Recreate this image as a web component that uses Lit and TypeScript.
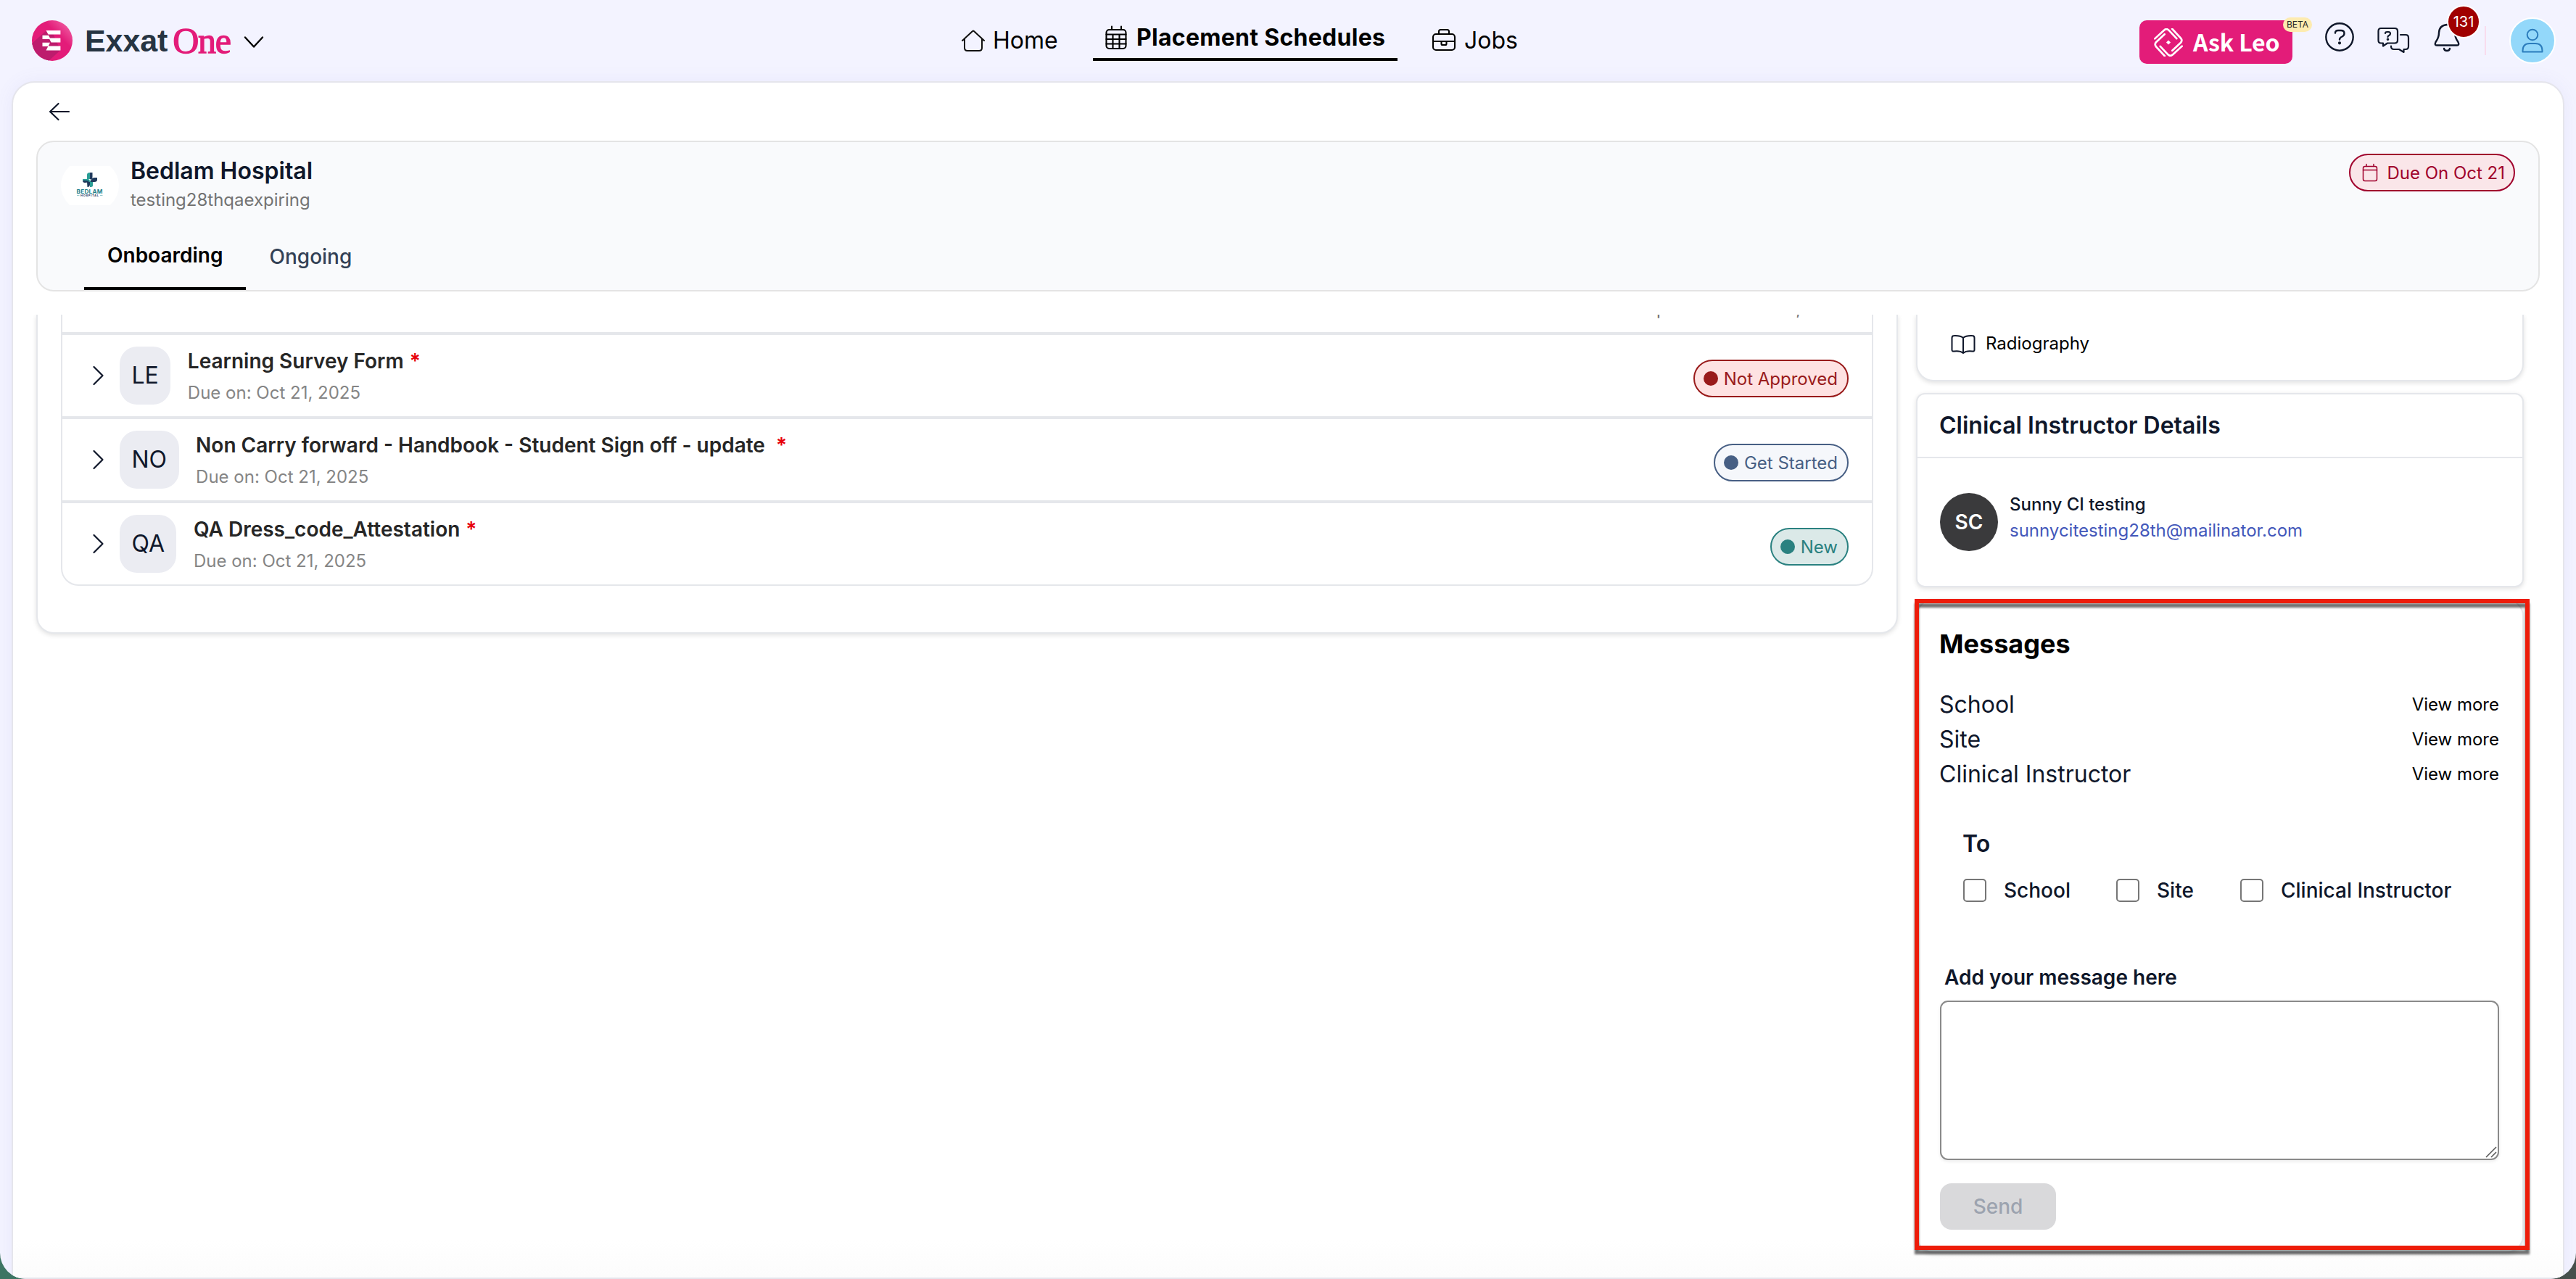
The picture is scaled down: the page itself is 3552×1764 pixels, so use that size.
import { LitElement, html, css, svg } from "lit";
import { customElement } from "lit/decorators.js";
import { classMap } from "lit/directives/class-map.js";

interface Requirement {
  code: string;
  title: string;
  wide?: boolean;
  due: string;
  status: string;
  tone: "danger" | "neutral" | "fresh";
}

const REQUIREMENTS: Requirement[] = [
  { code: "LE", title: "Learning Survey Form", due: "Oct 21, 2025", status: "Not Approved", tone: "danger" },
  { code: "NO", title: "Non Carry forward - Handbook - Student Sign off - update", wide: true, due: "Oct 21, 2025", status: "Get Started", tone: "neutral" },
  { code: "QA", title: "QA Dress_code_Attestation", due: "Oct 21, 2025", status: "New", tone: "fresh" },
];

const PARTIES = ["School", "Site", "Clinical Instructor"];

const LEO_ARM = "M1.2 14 L13.6 2.6 Q17 -0.3 20 2.6 L30.5 13.8";

@customElement("app-header")
export class AppHeader extends LitElement {
  static styles = css`
    :host { display: block; height: 112px; flex: none; }
    .bar {
      display: grid; grid-template-columns: 1282px 1624px 1fr; height: 112px;
      padding-left: 44px; box-sizing: border-box; color: #000;
      font-family: Inter, "Liberation Sans", sans-serif;
    }
    .brand { display: flex; align-items: center; height: 112px; }
    .mark { width: 56px; height: 56px; margin-right: 17px; }
    .exxat {
      font: 700 43px/56px "Liberation Sans", Arial, sans-serif; color: #263442; letter-spacing: -0.1px;
    }
    .one {
      font: 400 50px/56px "Liberation Serif", "Times New Roman", serif; color: #e31c79;
      -webkit-text-stroke: 1.3px #e31c79; letter-spacing: -1.3px; margin-left: 7px;
    }
    .chev { margin: 4px 0 0 18px; }
    .nav { display: flex; font-size: 32px; line-height: 40px; }
    .item { display: flex; align-items: flex-start; box-sizing: border-box; height: 84px; padding-top: 35px; white-space: nowrap; }
    .item svg { flex: none; }
    .label { margin-top: 1px; }
    .home { width: 181px; gap: 11px; }
    .sched { width: 420px; padding: 31px 0 0 17px; gap: 13px; border-bottom: 4px solid #000; font-weight: 700; }
    .sched .label { letter-spacing: 0.28px; }
    .jobs { margin-left: 47px; gap: 11px; }
    .actions { display: flex; align-items: flex-start; }
    .leo {
      position: relative; display: flex; align-items: center; box-sizing: border-box;
      width: 211px; height: 60px; margin-top: 28px; padding-left: 20px; gap: 14px;
      background: #e31c79; color: #fff; border-radius: 10px;
      font: 700 32px/40px "Noto Sans CJK JP", "Noto Sans", sans-serif; white-space: nowrap;
    }
    .ask { margin-bottom: 3px; letter-spacing: -0.1px; }
    .beta {
      position: absolute; left: 198px; top: -4px; width: 40px; height: 20px; border-radius: 10px;
      background: #fdebb0; color: #222; font: 400 12px/20px Inter, sans-serif; text-align: center;
    }
    .help { margin: 31px 0 0 45px; }
    .chat { margin: 37px 0 0 32px; }
    .bell { position: relative; margin: 32px 0 0 33px; width: 36px; height: 40px; }
    .count {
      position: absolute; left: 18px; top: -25px; width: 42px; height: 42px; border: 2px solid #fff;
      border-radius: 50%; background: #a00000; color: #fff; font-size: 20px; line-height: 42px; text-align: center;
    }
    .rule { width: 2px; height: 40px; margin: 36px 0 0 34px; background: #f8dcee; }
    .avatar {
      margin: 24px 0 0 32px; width: 60px; height: 60px; border: 2px solid #fff; border-radius: 50%;
      background: #93d8fa; display: flex; align-items: center; justify-content: center;
    }
  `;

  render() {
    return html`
      <div class="bar">
        <div class="brand">
          <svg class="mark" viewBox="0 0 56 56">
            <defs>
              <linearGradient id="g" x1="1" y1="0" x2="0.4" y2="0.6">
                <stop offset="0" stop-color="#f373b0" /><stop offset="0.6" stop-color="#e31c79" />
              </linearGradient>
              <clipPath id="c"><circle cx="28" cy="28" r="28" /></clipPath>
            </defs>
            <circle cx="28" cy="28" r="28" fill="url(#g)" />
            <path d="M19.500 14.500 L0 32V56H23L39.400 41.300 L28 16Z" fill="#bd1c6d" clip-path="url(#c)" />
            <path d="M19.500 14H39.400V19.500H22.500ZM14.500 20.700H23L25.700 26H14.500ZM23.500 24.500H39.400V30.500H26.500ZM14.500 30.700H25L22.500 36H14.500ZM22.500 35.500H39.400V41.500H19.500Z" fill="#fff" />
          </svg>
          <span class="exxat">Exxat</span><span class="one">One</span>
          <svg class="chev" width="28" height="18" viewBox="0 0 28 18" fill="none" stroke="#000" stroke-width="2.4" stroke-linecap="round" stroke-linejoin="round"><path d="M2 2.5L14 15.5L26 2.5" /></svg>
        </div>
        <nav class="nav">
          <div class="item home">
            <svg width="32" height="40" viewBox="0 0 32 40" fill="none" stroke="#111" stroke-width="2" stroke-linecap="round" stroke-linejoin="round"><path d="M1 21L15 8Q16 7.2 17 8L31 21M4 18.5V31Q4 35 8 35H24Q28 35 28 31V18.5" /></svg>
            <span class="label">Home</span>
          </div>
          <div class="item sched">
            <svg width="30" height="40" viewBox="0 0 30 40" fill="none" stroke="#000" stroke-width="2.1" stroke-linecap="round"><path d="M9 5.5V10M22 5.5V10M1.5 16.5H28.5M1.5 23H28.5M1.5 29.5H28.5M10.5 16.5V36M19.5 16.5V36" /><rect x="1.5" y="10" width="27" height="26" rx="4" /></svg>
            <span class="label">Placement Schedules</span>
          </div>
          <div class="item jobs">
            <svg width="34" height="40" viewBox="0 0 34 40" fill="none" stroke="#000" stroke-width="2.1" stroke-linejoin="round"><rect x="2" y="12" width="30" height="22" rx="4" /><path d="M10 12V8.5Q10 6 12.500 6H21.500Q24 6 24 8.500V12M2 22H32M13.500 22V25.500Q13.500 27 15 27H19Q20.500 27 20.500 25.500V22" /></svg>
            <span class="label">Jobs</span>
          </div>
        </nav>
        <div class="actions">
          <div class="leo">
            <svg width="40" height="39" viewBox="0 0 39 38" fill="none" stroke="#fff" stroke-width="2.6" stroke-linecap="round">
              ${[0, 90, 180, 270].map((a) => svg`<path d=${LEO_ARM} transform="rotate(${a} 19.5 19)" />`)}
              <path d="M19.500 16L22.500 19L19.500 22L16.500 19Z" fill="#fff" stroke="none" />
            </svg>
            <span class="ask">Ask Leo</span>
            <span class="beta">BETA</span>
          </div>
          <svg class="help" width="40" height="40" viewBox="0 0 40 40" fill="none" stroke="#0f172a" stroke-width="2.4" stroke-linecap="round" stroke-linejoin="round"><circle cx="20" cy="20" r="18.700" /><path d="M14 14.500Q14 11 18 11H22Q26.500 11 26.500 15Q26.500 18 23.500 19.500Q20 21 20 23.500" /><circle cx="20" cy="28.300" r="0.900" fill="#0f172a" /></svg>
          <svg class="chat" width="45" height="37" viewBox="0 0 45 37" fill="none" stroke="#0f172a" stroke-width="2.2" stroke-linecap="round" stroke-linejoin="round"><path d="M5 2H24Q28 2 28 6V18.500Q28 22.500 24 22.500H14L8 26.500V22.500H5Q1.500 22.500 1.500 18.500V6Q1.500 2 5 2Z" /><path d="M32 11H39Q43 11 43 15V27Q43 31 39 31H36.500V35L30 31H23Q19 31 19 27V26.500" /><path d="M11 9Q11 7 13.500 7H15.500Q18 7 18 9.500Q18 11 16 12Q14.500 12.700 14.500 14" /><circle cx="14.500" cy="17.200" r="0.700" fill="#0f172a" /></svg>
          <div class="bell">
            <svg width="36" height="40" viewBox="0 0 36 40" fill="none" stroke="#0f172a" stroke-width="2.4" stroke-linecap="round" stroke-linejoin="round"><path d="M18 2Q7.500 3 7 13Q7 20 2.500 26Q.500 30.500 4 30.500H32Q35.500 30.500 33.500 26Q29 20 29 13Q28.500 3 18 2ZM14 35Q14.500 38 18 38Q21.500 38 22 35" /></svg>
            <span class="count">131</span>
          </div>
          <div class="rule"></div>
          <div class="avatar">
            <svg width="30" height="34" viewBox="0 0 30 34" fill="none" stroke="#2b7cbc" stroke-width="2" stroke-linejoin="round"><circle cx="15" cy="9" r="7.300" /><path d="M1.500 32.500V31Q1.500 21 11 21H19Q28.500 21 28.500 31V32.500Z" /></svg>
          </div>
        </div>
      </div>
    `;
  }
}

@customElement("site-banner")
export class SiteBanner extends LitElement {
  static styles = css`
    :host { display: block; }
    .card {
      box-sizing: border-box; height: 208px; border: 2px solid #e4e4e4; border-radius: 24px; background: #f9fafc;
      display: flex; flex-direction: column; justify-content: space-between;
      font-family: Inter, "Liberation Sans", sans-serif;
    }
    .top { display: flex; align-items: flex-start; padding: 0 32px; }
    .logo { width: 80px; height: 54px; margin-top: 33px; }
    .who { margin: 20px auto 0 16px; }
    .name { font-size: 32px; line-height: 40px; font-weight: 600; color: #0f172a; }
    .sub { font-size: 24px; line-height: 40px; color: #737373; }
    .due {
      display: flex; align-items: center; box-sizing: border-box; height: 52px; margin-top: 16px; padding: 0 12px 0 16px;
      border: 2px solid #a0002c; border-radius: 26px; background: #fae6e9; color: #a0002c;
      font-size: 24px; gap: 12px; white-space: nowrap;
    }
    .tabs { display: flex; padding-left: 64px; font-size: 28px; line-height: 34px; }
    .tab { padding: 2px 32px 29px; font-weight: 500; color: #334155; }
    .tab.active { padding: 0 32px 27px; border-bottom: 4px solid #000; font-weight: 600; color: #000; }
  `;

  render() {
    return html`
      <section class="card">
        <div class="top">
          <svg class="logo" viewBox="0 0 80 54">
            <path d="M12 0H68Q80 12 80 27Q80 42 68 54H12Q0 42 0 27Q0 12 12 0Z" fill="#fff" />
            <path d="M36 18V12Q36 9 40 9V18ZM30 18H37Q40 18 40 22H33Q30 22 30 18ZM44 20V27Q44 29 40 29V20Z" fill="#2a9d96" />
            <path d="M40 9H43.500V15Q43.500 18 40 18.500ZM50 16V19Q50 22 46 22H41Q41 16 46 16ZM36 22H40V25Q40 29 36.500 29ZM30 20Q33 19.500 39 20.500Q38 23 33 23Q30 23 30 20Z" fill="#1f3a5c" />
            <text x="39.500" y="37.800" text-anchor="middle" font-family="Inter, sans-serif" font-weight="700" font-size="8.200" textLength="36" fill="#1f7f8c">BEDLAM</text>
            <text x="39.500" y="42" text-anchor="middle" font-family="Inter, sans-serif" font-weight="700" font-size="4" textLength="25" fill="#243a5e">HOSPITAL</text>
            <path d="M22 40.500H25.500M54 40.500H57.500" stroke="#7dbcc0" stroke-width="0.800" />
          </svg>
          <div class="who">
            <div class="name">Bedlam Hospital</div>
            <div class="sub">testing28thqaexpiring</div>
          </div>
          <div class="due">
            <svg width="22" height="26" viewBox="0 0 22 26" fill="none" stroke="#a0002c" stroke-width="1.500" stroke-linecap="round"><rect x="1.500" y="4.500" width="19" height="20" rx="2.500" /><path d="M6 1.500V4.500M16 1.500V4.500M1.500 9.500H20.500" /></svg>
            <span>Due On Oct 21</span>
          </div>
        </div>
        <div class="tabs">
          <div class="tab active">Onboarding</div>
          <div class="tab">Ongoing</div>
        </div>
      </section>
    `;
  }
}

@customElement("requirement-list")
export class RequirementList extends LitElement {
  static styles = css`
    :host { display: block; width: 2567px; flex: none; font-family: Inter, "Liberation Sans", sans-serif; }
    .card {
      box-sizing: border-box; height: 440px; padding: 0 32px; background: #fff;
      border: 2px solid #e5e7eb; border-top: 0; border-radius: 0 0 24px 24px;
      box-shadow: 0 2px 6px rgba(0, 0, 0, 0.12);
    }
    .list { border: 2px solid #e5e7eb; border-top: 0; border-radius: 0 0 24px 24px; }
    .clipped { display: flex; justify-content: flex-end; height: 24px; padding-right: 32px; overflow: hidden; }
    .done { margin-top: -26.500px; font-size: 24px; line-height: 36px; color: #737373; }
    .row {
      display: flex; align-items: center; height: 112px; border-top: 4px solid #e5e7eb; padding: 0 32px 0 41px;
    }
    .chev { flex: none; margin-right: 21px; }
    .code {
      box-sizing: border-box; height: 80px; padding: 0 16.500px; border-radius: 24px; background: #ebecf2;
      color: #0f172a; font-size: 32px; line-height: 80px;
    }
    .info { margin: 2px auto 0 23.500px; }
    .title { font-size: 28px; line-height: 44px; font-weight: 600; color: #262626; white-space: nowrap; }
    .star { color: #e7000b; margin-left: 8px; }
    .star.wide { margin-left: 15px; }
    .when { font-size: 24px; line-height: 43px; color: #858585; }
    .pill {
      display: flex; align-items: center; box-sizing: border-box; height: 52px; margin-top: 8px; padding: 0 13px 0 12px;
      border: 2px solid currentColor; border-radius: 26px; gap: 8px; font-size: 24px; white-space: nowrap;
    }
    .dot { width: 20px; height: 20px; border-radius: 50%; background: currentColor; }
    .danger { color: #991b1b; background: #fee2e2; }
    .neutral { color: #475f84; background: #f5f7fb; }
    .fresh { color: #2a8180; background: #dbe9e8; }
  `;

  private row(r: Requirement) {
    return html`
      <div class="row">
        <svg class="chev" width="17" height="28" viewBox="0 0 17 28" fill="none" stroke="#0f172a" stroke-width="2.200" stroke-linecap="round" stroke-linejoin="round"><path d="M2.500 2L14.500 14L2.500 26" /></svg>
        <div class="code">${r.code}</div>
        <div class="info">
          <div class="title">${r.title}<span class=${classMap({ star: true, wide: !!r.wide })}>*</span></div>
          <div class="when">Due on: ${r.due}</div>
        </div>
        <div class="pill ${r.tone}"><span class="dot"></span><span>${r.status}</span></div>
      </div>
    `;
  }

  render() {
    return html`
      <section class="card">
        <div class="list">
          <div class="clipped"><span class="done">Updated on Oct 21, 2025</span></div>
          ${REQUIREMENTS.map((r) => this.row(r))}
        </div>
      </section>
    `;
  }
}

@customElement("detail-rail")
export class DetailRail extends LitElement {
  static styles = css`
    :host { display: flex; flex-direction: column; gap: 16px; width: 838px; flex: none; font-family: Inter, "Liberation Sans", sans-serif; color: #0f172a; }
    .card { box-sizing: border-box; background: #fff; border: 2px solid #e5e7eb; box-shadow: 0 2px 6px rgba(0, 0, 0, 0.12); }
    .program {
      display: flex; align-items: flex-start; gap: 14px; height: 92px; padding: 24px 0 0 46px;
      border-top: 0; border-radius: 0 0 24px 24px; font-size: 24px; line-height: 32px; color: #000;
    }
    .program svg { margin-top: 3px; }
    .instructor { height: 268px; border-radius: 12px; }
    .head { height: 86px; padding-left: 30px; border-bottom: 2px solid #e5e7eb; font-size: 32px; line-height: 86px; font-weight: 600; }
    .person { display: flex; padding: 48px 0 0 31px; gap: 16px; }
    .face { width: 80px; height: 80px; border-radius: 50%; background: #3a3a3c; color: #fff; font-size: 28px; line-height: 80px; font-weight: 600; text-align: center; }
    .pname { margin-top: -2px; font-size: 24px; line-height: 36px; font-weight: 500; }
    .mail { font-size: 24px; line-height: 36px; color: #4357ba; }
    .messages { position: relative; height: 902px; border-radius: 24px; padding: 0 32px 0 31px; }
    .frame {
      position: absolute; left: -4px; top: -2px; width: 848px; height: 898px; box-sizing: border-box;
      border: 6px solid #ed1c0a; filter: drop-shadow(0 6px 1.500px rgba(0, 0, 0, 0.560)); pointer-events: none;
    }
    .heading { margin-left: -1px; padding-top: 35px; font-size: 36px; line-height: 50px; font-weight: 700; color: #000; }
    .threads { margin-left: -1px; padding-top: 31px; }
    .thread { display: flex; justify-content: space-between; height: 48px; line-height: 56px; font-size: 32px; }
    .more { font-size: 24px; color: #000; }
    .to { padding: 53px 0 0 31px; font-size: 32px; line-height: 46px; font-weight: 600; }
    .choices { display: flex; align-items: center; padding: 25px 0 0 32px; height: 32px; font-size: 28px; font-weight: 500; white-space: nowrap; }
    .choice { display: flex; align-items: center; gap: 24px; }
    .box { box-sizing: border-box; width: 32px; height: 32px; border: 2px solid #767676; border-radius: 5px; }
    .c0 { width: 211px; }
    .c1 { width: 171px; }
    .label { padding: 84px 0 0 6px; font-size: 28px; line-height: 40px; font-weight: 600; }
    .input {
      position: relative; box-sizing: border-box; height: 220px; margin-top: 12px; border: 2px solid #8a8a8a; border-radius: 11px;
      box-shadow: 0 2px 4px rgba(0, 0, 0, 0.080);
    }
    .grip { position: absolute; right: 1px; bottom: 1px; }
    .send {
      width: 160px; height: 64px; margin-top: 32px; border-radius: 16px; background: #d9d9db; color: #9ca3af;
      font-size: 28px; line-height: 64px; font-weight: 500; text-align: center;
    }
  `;

  render() {
    return html`
      <section class="card program">
        <svg width="34" height="28" viewBox="0 0 34 28" fill="none" stroke="#0f172a" stroke-width="2" stroke-linejoin="round"><path d="M17 5Q13 1.500 4.500 2Q1.500 2 1.500 5V21.500Q1.500 24 4.500 23.500Q13 22.500 17 26Q21 22.500 29.500 23.500Q32.500 24 32.500 21.500V5Q32.500 2 29.500 2Q21 1.500 17 5ZM17 5V26" /></svg>
        <span>Radiography</span>
      </section>
      <section class="card instructor">
        <div class="head">Clinical Instructor Details</div>
        <div class="person">
          <div class="face">SC</div>
          <div>
            <div class="pname">Sunny CI testing</div>
            <div class="mail">sunnycitesting28th@mailinator.com</div>
          </div>
        </div>
      </section>
      <section class="card messages">
        <div class="heading">Messages</div>
        <div class="threads">
          ${PARTIES.map((p) => html`<div class="thread"><span>${p}</span><span class="more">View more</span></div>`)}
        </div>
        <div class="to">To</div>
        <div class="choices">
          ${PARTIES.map((p, i) => html`<div class="choice c${i}"><span class="box"></span><span>${p}</span></div>`)}
        </div>
        <div class="label">Add your message here</div>
        <div class="input">
          <svg class="grip" width="16" height="16" viewBox="0 0 16 16" stroke="#555" stroke-width="1.500"><path d="M1 15L15 1M8 15L15 8" /></svg>
        </div>
        <div class="send">Send</div>
        <div class="frame"></div>
      </section>
    `;
  }
}

@customElement("app-root")
export class AppRoot extends LitElement {
  static styles = css`
    :host { display: block; width: 3552px; height: 1764px; overflow: hidden; background: linear-gradient(90deg, #3d7563 50%, #46504c 50%); }
    .window {
      display: flex; flex-direction: column; width: 3552px; height: 1764px; overflow: hidden;
      background: #f3f3ff; border-radius: 0 0 36px 36px;
    }
    .panel {
      box-sizing: border-box; height: 1652px; margin: 0 16px; display: flex; flex-direction: column;
      border: 2px solid #e5e5ec; border-radius: 32px 32px 0 0; background: #fff;
      box-shadow: 0 0 24px rgba(120, 120, 220, 0.080);
    }
    .back { display: block; margin: 27px 0 0 49px; height: 26px; }
    .banner { margin: 27px 32px 0; }
    .viewport {
      display: flex; align-items: flex-start; gap: 25px; flex: 1; margin-top: 32px; padding-left: 32px;
      overflow: hidden; background: linear-gradient(#fff 96%, #fcfcfc);
    }
  `;

  render() {
    return html`
      <div class="window">
        <app-header></app-header>
        <main class="panel">
          <svg class="back" width="30" height="26" viewBox="0 0 30 26" fill="none" stroke="#0f172a" stroke-width="2.200" stroke-linecap="round" stroke-linejoin="round"><path d="M13.500 2L2 13L13.500 24M2 13H28" /></svg>
          <site-banner class="banner"></site-banner>
          <div class="viewport">
            <requirement-list></requirement-list>
            <detail-rail></detail-rail>
          </div>
        </main>
      </div>
    `;
  }
}
